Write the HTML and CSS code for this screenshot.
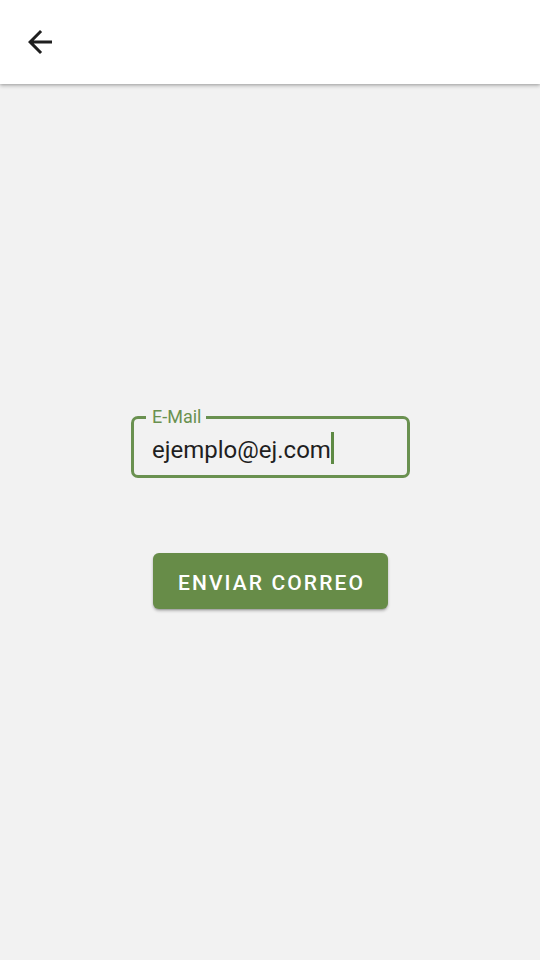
FILE: index.html
```html
<!DOCTYPE html>
<html lang="es">
<head>
<meta charset="utf-8">
<title>Recuperar contraseña</title>
<link rel="stylesheet" href="styles.css">
</head>
<body>
<header class="appbar">
  <button class="back" aria-label="Volver">
    <svg viewBox="0 0 24 24" width="36" height="36"><path d="M20 11H7.83l5.59-5.59L12 4l-8 8 8 8 1.41-1.41L7.83 13H20v-2z" fill="#1f1f1f"/></svg>
  </button>
</header>
<main class="content">
  <div class="field">
    <span class="label">E-Mail</span>
    <div class="value"><span class="text">ejemplo@ej.com</span><span class="caret"></span></div>
  </div>
  <button class="send">ENVIAR CORREO</button>
</main>
</body>
</html>
```
FILE: styles.css
```css
* { box-sizing: border-box; }
html, body { margin: 0; padding: 0; }
body {
  width: 540px;
  height: 960px;
  background: #f2f2f2;
  font-family: Roboto, "Noto Sans", sans-serif;
  overflow: hidden;
}
.appbar {
  height: 84px;
  background: #ffffff;
  box-shadow: 0 2px 4px rgba(0,0,0,0.22), 0 1px 2px rgba(0,0,0,0.12);
  display: flex;
  align-items: center;
  padding-left: 22px;
  position: relative;
  z-index: 1;
}
.back {
  border: 0;
  background: none;
  padding: 0;
  width: 36px;
  height: 36px;
  display: flex;
}
.content {
  display: flex;
  flex-direction: column;
  align-items: center;
  padding-top: 332px;
}
.field {
  position: relative;
  width: 279px;
  height: 62px;
  border: 3px solid #6a9150;
  border-radius: 7px;
  margin-left: 1px;
  padding: 13px 0 0 18px;
}
.label {
  position: absolute;
  top: -13px;
  left: 12px;
  padding: 0 5px 0 6px;
  background: #f2f2f2;
  color: #6a9150;
  font-size: 18px;
  line-height: 22px;
}
.value {
  display: flex;
  align-items: flex-start;
}
.text {
  font-size: 24px;
  line-height: 32px;
  padding-top: 2px;
  color: #1f1f1f;
}
.caret {
  display: block;
  width: 3px;
  height: 32px;
  background: #5e8a44;
}
.send {
  margin-top: 75px;
  width: 235px;
  height: 56px;
  border: 0;
  border-radius: 6px;
  background: #678c48;
  color: #ffffff;
  font-family: Roboto, sans-serif;
  font-weight: 500;
  font-size: 21px;
  letter-spacing: 2.1px;
  box-shadow: 0 2px 3px rgba(0,0,0,0.25), 0 1px 1px rgba(0,0,0,0.12);
  padding: 3px 0 0 3px;
}
```
